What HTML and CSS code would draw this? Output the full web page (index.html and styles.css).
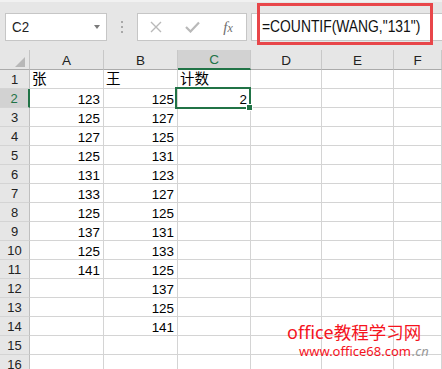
FILE: index.html
```html
<!DOCTYPE html>
<html>
<head>
<meta charset="utf-8">
<link rel="stylesheet" href="styles.css">
</head>
<body>
<div class="page">
  <div class="toolbar">
    <div class="namebox"><span class="nb-text">C2</span><span class="nb-arrow"></span></div>
    <div class="sep"><i></i><i></i><i></i></div>
    <div class="fbuttons">
      <div class="fbtn">
        <svg width="12" height="12" viewBox="0 0 12 12"><path d="M1 1 L11 11 M11 1 L1 11" stroke="#b9b9b9" stroke-width="1.4" fill="none"/></svg>
      </div>
      <div class="fbtn">
        <svg width="15" height="12" viewBox="0 0 15 12"><path d="M1 6 L5.5 10.5 L14 1.5" stroke="#b9b9b9" stroke-width="2.2" fill="none"/></svg>
      </div>
      <div class="fbtn"><span class="fx">f<span class="fx-x">x</span></span></div>
    </div>
    <div class="formula"><span class="ftext">=COUNTIF(WANG,"131")</span></div>
    <div class="redbox"></div>
  </div>

  <div class="sheet">
    <div class="grid">
      <div class="corner"><svg width="10" height="10" viewBox="0 0 10 10"><polygon points="10,0 10,10 0,10" fill="#b8b8b8"/></svg></div>
      <div class="ch">A</div><div class="ch">B</div><div class="ch sel">C</div><div class="ch">D</div><div class="ch">E</div><div class="ch">F</div>

      <div class="rh">1</div><div class="c cjk">张</div><div class="c cjk">王</div><div class="c cjk">计数</div><div class="c"></div><div class="c"></div><div class="c"></div>
      <div class="rh sel">2</div><div class="c n">123</div><div class="c n">125</div><div class="c n">2</div><div class="c"></div><div class="c"></div><div class="c"></div>
      <div class="rh">3</div><div class="c n">125</div><div class="c n">127</div><div class="c"></div><div class="c"></div><div class="c"></div><div class="c"></div>
      <div class="rh">4</div><div class="c n">127</div><div class="c n">125</div><div class="c"></div><div class="c"></div><div class="c"></div><div class="c"></div>
      <div class="rh">5</div><div class="c n">125</div><div class="c n">131</div><div class="c"></div><div class="c"></div><div class="c"></div><div class="c"></div>
      <div class="rh">6</div><div class="c n">131</div><div class="c n">123</div><div class="c"></div><div class="c"></div><div class="c"></div><div class="c"></div>
      <div class="rh">7</div><div class="c n">133</div><div class="c n">127</div><div class="c"></div><div class="c"></div><div class="c"></div><div class="c"></div>
      <div class="rh">8</div><div class="c n">125</div><div class="c n">125</div><div class="c"></div><div class="c"></div><div class="c"></div><div class="c"></div>
      <div class="rh">9</div><div class="c n">137</div><div class="c n">131</div><div class="c"></div><div class="c"></div><div class="c"></div><div class="c"></div>
      <div class="rh">10</div><div class="c n">125</div><div class="c n">133</div><div class="c"></div><div class="c"></div><div class="c"></div><div class="c"></div>
      <div class="rh">11</div><div class="c n">141</div><div class="c n">125</div><div class="c"></div><div class="c"></div><div class="c"></div><div class="c"></div>
      <div class="rh">12</div><div class="c"></div><div class="c n">137</div><div class="c"></div><div class="c"></div><div class="c"></div><div class="c"></div>
      <div class="rh">13</div><div class="c"></div><div class="c n">125</div><div class="c"></div><div class="c"></div><div class="c"></div><div class="c"></div>
      <div class="rh">14</div><div class="c"></div><div class="c n">141</div><div class="c"></div><div class="c"></div><div class="c"></div><div class="c"></div>
      <div class="rh">15</div><div class="c"></div><div class="c"></div><div class="c"></div><div class="c"></div><div class="c"></div><div class="c"></div>
      <div class="rh">16</div><div class="c"></div><div class="c"></div><div class="c"></div><div class="c"></div><div class="c"></div><div class="c"></div>
    </div>
    <div class="selbox"><span class="handle"></span></div>
  </div>

  <div class="watermark">
    <div class="wm1"><span class="wm-lat">office</span><span class="wm-cjk">教程学习网</span></div>
    <div class="wm2">www.office68.com<span class="wm-cn">.cn</span></div>
  </div>
</div>
</body>
</html>
```

FILE: styles.css
```css
* { box-sizing: border-box; }
html, body { margin: 0; padding: 0; }
body {
  width: 442px;
  height: 369px;
  overflow: hidden;
  background: #ffffff;
  font-family: "Liberation Sans", "Noto Sans CJK SC", sans-serif;
  color: #000;
}
.page { position: relative; width: 442px; height: 369px; overflow: hidden; }

.toolbar {
  position: relative;
  height: 50px;
  background: #e6e6e6;
  border-top: 2px solid #f1f1f1;
  display: flex;
  align-items: flex-start;
  padding-top: 11px;
  padding-left: 5px;
}
.namebox {
  flex: 0 0 102px;
  height: 28px;
  background: #fff;
  border: 1px solid #c6c6c6;
  display: flex;
  align-items: center;
  justify-content: space-between;
  padding: 0 6px 0 6px;
}
.nb-text { font-size: 14.5px; color: #222; transform: scaleX(0.92); transform-origin: left center; }
.nb-arrow {
  width: 0; height: 0;
  border-left: 3.5px solid transparent;
  border-right: 3.5px solid transparent;
  border-top: 4px solid #7a7a7a;
}
.sep {
  flex: 0 0 30px;
  height: 28px;
  display: flex;
  flex-direction: column;
  align-items: center;
  justify-content: center;
  gap: 3px;
}
.sep i { display: block; width: 2px; height: 2px; background: #a8a8a8; }
.fbuttons {
  flex: 0 0 110px;
  height: 28px;
  background: #fff;
  border: 1px solid #c6c6c6;
  display: flex;
}
.fbtn { width: 36px; display: flex; align-items: center; justify-content: center; }
.fx { font-family: "Liberation Serif", serif; font-style: italic; font-size: 15px; color: #6e6e6e; }
.fx-x { font-size: 12px; }
.formula {
  flex: 1 1 0;
  min-width: 0;
  overflow: hidden;
  margin-left: 4px;
  height: 28px;
  background: #fff;
  border: 1px solid #c6c6c6;
  border-right: none;
  display: flex;
  align-items: center;
  padding-left: 10px;
}
.ftext {
  font-size: 17px;
  color: #111;
  white-space: nowrap;
  transform: scaleX(0.815);
  transform-origin: left center;
}
.redbox {
  position: absolute;
  left: 257px;
  top: 1px;
  width: 176px;
  height: 42px;
  border: 3px solid #e8464a;
}

.sheet { position: relative; }
.grid {
  display: grid;
  grid-template-columns: 30px 74px 74px 73px 71px 72px 48px;
  grid-template-rows: 20px;
  grid-auto-rows: 19px;
}
.corner {
  background: #e6e6e6;
  border-right: 1px solid #c4c4c4;
  border-bottom: 1px solid #ababab;
  display: flex;
  justify-content: flex-end;
  align-items: flex-end;
  padding: 0 4px 2px 0;
}
.ch {
  background: #e6e6e6;
  border-right: 1px solid #c8c8c8;
  border-bottom: 1px solid #ababab;
  display: flex;
  align-items: center;
  justify-content: center;
  font-size: 13.5px;
  color: #222;
  padding-top: 1px;
}
.ch.sel {
  background: #d2d2d2;
  color: #217346;
  border-bottom: 2px solid #217346;
}
.rh {
  background: #e6e6e6;
  border-right: 1px solid #bfbfbf;
  border-bottom: 1px solid #d4d4d4;
  display: flex;
  align-items: center;
  justify-content: center;
  font-size: 13px;
  color: #222;
  padding-top: 1px;
}
.rh.sel {
  background: #d2d2d2;
  color: #217346;
  border-right: 2px solid #217346;
}
.c {
  border-right: 1px solid #d4d4d4;
  border-bottom: 1px solid #d4d4d4;
  display: flex;
  align-items: flex-end;
  padding: 0 2px 0 2px;
  font-size: 13.4px;
  line-height: 15px;
  white-space: nowrap;
}
.c.n { justify-content: flex-end; padding-right: 3px; }
.c.cjk { font-size: 14.5px; line-height: 17px; padding-left: 2px; }

.selbox {
  position: absolute;
  left: 175px;
  top: 37px;
  width: 76px;
  height: 22px;
  border: 2px solid #217346;
}
.handle {
  position: absolute;
  right: -4px;
  bottom: -4px;
  width: 7px;
  height: 7px;
  background: #217346;
  border: 1px solid #fff;
}

.watermark {
  position: absolute;
  left: 287px;
  top: 321px;
  color: #f5141e;
  font-family: "Noto Sans", "Noto Sans CJK SC", sans-serif;
}
.wm1 { font-size: 17.5px; line-height: 22px; white-space: nowrap; }
.wm-lat { font-size: 18px; }
.wm2 { font-size: 13px; line-height: 16px; white-space: nowrap; margin-left: 12px; }
.wm-cn { color: #9a9a9a; font-style: italic; margin-left: 1px; }
```
